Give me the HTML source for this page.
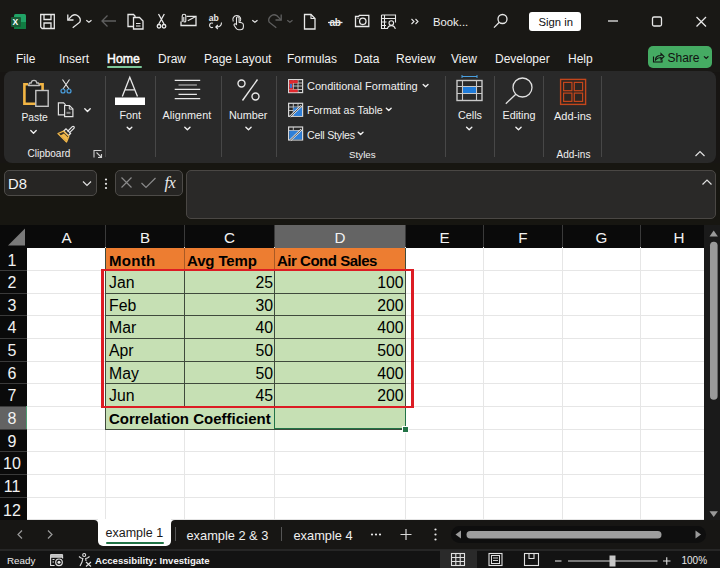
<!DOCTYPE html>
<html><head><meta charset="utf-8">
<style>
*{margin:0;padding:0;box-sizing:border-box}
html,body{width:720px;height:568px;overflow:hidden;background:#171513;font-family:"Liberation Sans",sans-serif;color:#fff}
.a{position:absolute}
.t{position:absolute;white-space:nowrap;line-height:1}
svg{position:absolute;overflow:visible}
.tab{position:absolute;top:52.7px;font-size:12px;color:#f2f2f2;white-space:nowrap;line-height:1}
#ribbon{left:3.5px;top:71px;width:712.5px;height:91.5px;background:#292929;border-radius:8px}
.sep{position:absolute;top:76px;width:1px;height:81px;background:#474747}
.rl{position:absolute;font-size:11px;color:#f0f0f0;white-space:nowrap;line-height:1}
.chev{position:absolute;width:4px;height:4px;border-right:1.2px solid #e0e0e0;border-bottom:1.2px solid #e0e0e0;transform:rotate(45deg)}
.grid{position:absolute;left:27px;top:247.5px;width:677px;height:273px;background:#fff}
.hl{position:absolute;left:27px;width:677px;height:1px;background:#e6e6e6}
.vl{position:absolute;top:247px;width:1px;height:273px;background:#e6e6e6}
.ch{position:absolute;top:225px;height:22.5px;background:#0a0a0a;color:#f2f2f2;font-size:15.2px;text-align:center;line-height:25px}
.chs{position:absolute;top:225px;width:1px;height:22.5px;background:#3a3a3a}
.rh{position:absolute;left:0;width:27px;height:22.75px;background:#0a0a0a;color:#f2f2f2;font-size:16px;text-align:center;line-height:23px;padding-right:3px}
.rhs{position:absolute;left:0;width:27px;height:1px;background:#3a3a3a}
.cell{position:absolute;font-size:15.8px;color:#000;line-height:23px;white-space:nowrap}
.num{text-align:right}
.bold{font-weight:bold}
</style></head><body>

<!-- ============ TITLE BAR ============ -->
<div class="a" style="left:0;top:0;width:720px;height:72px;background:#191815"></div>
<div class="a" style="left:0;top:163px;width:720px;height:62px;background:#171611"></div>
<!-- excel logo -->
<div class="a" style="left:14px;top:14px;width:12px;height:15px;background:#21a366;border-radius:1.5px"></div>
<div class="a" style="left:14px;top:22px;width:12px;height:7px;background:#107c41;border-radius:0 0 1.5px 1.5px"></div>
<div class="a" style="left:11px;top:16.5px;width:9.5px;height:10px;background:#185c37;border-radius:1px"></div>
<div class="t" style="left:12.5px;top:18px;font-size:8.5px;font-weight:bold;color:#fff">X</div>

<svg width="720" height="42" style="left:0;top:0" fill="none" stroke="#e8e8e8" stroke-width="1.3">
 <!-- save -->
 <path d="M40.7 14.5h13.6v14h-12.2l-1.4-1.5z"/>
 <path d="M44 14.5v5h7v-5M44 28.5v-5.5h7v5.5"/>
 <!-- undo -->
 <path d="M67.8 14.5V20h5.7"/>
 <path d="M68.2 19.6l4-4a5.3 5.3 0 0 1 7.6 6.6l-7.1 5.6"/>
 <path d="M86.3 20.3l2.6 2 2.6-2" stroke-width="1.2"/>
 <!-- back arrow (disabled) -->
 <path d="M102 21h14M107.5 15.5l-5.5 5.5 5.5 5.5" stroke="#5f5f5f"/>
 <!-- copy doc -->
 <path d="M133 26.5h-5v-12h5.5l1.5 1.5v1.5"/>
 <path d="M133.5 17.5h6l3.5 3.5v8h-9.5z"/>
 <path d="M136 23.5h4.5M136 26h4.5" stroke-width="1"/>
 <!-- scissors -->
 <path d="M158.5 14l5.5 10M164.3 14l-5.5 10"/>
 <circle cx="159" cy="26.3" r="1.8"/><circle cx="164" cy="26.3" r="1.8"/>
 <!-- envelope with clip -->
 <path d="M186.5 16.3h9.5v9.2h-15v-4"/>
 <path d="M187.8 20.7l8-4.2" stroke-width="1.1"/>
 <path d="M182.2 22v-6a1.8 1.8 0 0 1 3.6 0v5a1 1 0 0 1-2 0v-4" stroke-width="1.1"/>
 <!-- spelling ab -->
 <text x="208.8" y="21.3" font-family="Liberation Sans" font-size="8.6" font-weight="bold" fill="#e8e8e8" stroke="none">ab</text>
 <path d="M213 23.3a2.3 2.3 0 1 0 0 4" stroke-width="1.1"/>
 <path d="M221.5 22.5c0 3-2 4.5-5 4.5M217.8 25l-2 2 2 2" stroke-width="1.1"/>
 <!-- touch hand -->
 <path d="M233.3 21.5a4 4 0 1 1 7 0" stroke-width="1.1"/>
 <path d="M236.5 24.5v-6.5a1.3 1.3 0 0 1 2.6 0v4.3l2.5.5c1.2.3 1.8 1 1.8 2.2v1.5c0 2-1.2 3.3-3.2 3.3h-1.5c-1.2 0-2-.6-2.6-1.5l-2-3a1.1 1.1 0 0 1 1.8-1.2z" stroke-width="1.1"/>
 <path d="M252.3 20.3l2.6 2 2.6-2" stroke-width="1.2"/>
 <!-- redo disabled -->
 <path d="M281.2 14.5V20h-5.7" stroke="#5f5f5f"/>
 <path d="M280.8 19.6l-4-4a5.3 5.3 0 0 0 -7.6 6.6l7.1 5.6" stroke="#5f5f5f"/>
 <path d="M287.3 20.3l2.6 2 2.6-2" stroke="#5f5f5f" stroke-width="1.2"/>
 <!-- new doc -->
 <path d="M304.5 14.5h6.5l4 4v10.5h-10.5z"/>
 <path d="M311 14.5v4h4" stroke-width="1.1"/>
 <!-- strikethrough ab -->
 <text x="329.5" y="26" font-family="Liberation Sans" font-size="10" font-weight="bold" fill="#e8e8e8" stroke="none" letter-spacing="-0.3">ab</text>
 <path d="M328 22.5h14.5" stroke-width="1.3"/>
 <!-- camera -->
 <path d="M355.5 16.5h3l1-1.2h9.3v11.2h-13.3z"/>
 <circle cx="362.8" cy="21.3" r="3.2"/>
 <path d="M357.5 18.5h1" stroke-width="1.2"/>
 <!-- form icon -->
 <path d="M381.5 15h14v7.5M381.5 15v13.5h5.5M384.5 15v13.5M381.5 18.5h14M381.5 22h5M381.5 25.5h4.5" stroke-width="1.1"/>
 <circle cx="391.3" cy="23" r="2.3" stroke-width="1.1"/>
 <path d="M387.3 29c.4-2.2 2-3.4 4-3.4s3.6 1.2 4 3.4" stroke-width="1.1"/>
 <!-- >> -->
 <path d="M411.5 19l2.5 2.5-2.5 2.5M415.5 19l2.5 2.5-2.5 2.5" stroke-width="1.1"/>
 <!-- search -->
 <circle cx="502.5" cy="19" r="4.5"/>
 <path d="M499.3 22.3l-5.3 5.3"/>
 <!-- minimize -->
 <path d="M608 21h10"/>
 <!-- maximize -->
 <rect x="652.5" y="17" width="9" height="9" rx="1.5"/>
 <!-- close -->
 <path d="M696.5 17l9.5 9.5M706 17l-9.5 9.5"/>
</svg>
<div class="t" style="left:433px;top:16.8px;font-size:11.3px;color:#f0f0f0">Book...</div>
<!-- sign in -->
<div class="a" style="left:529px;top:12px;width:52px;height:19px;background:#fff;border-radius:3px"></div>
<div class="t" style="left:538.5px;top:16.8px;font-size:11.3px;color:#111">Sign in</div>

<!-- ============ TABS ============ -->
<div class="tab" style="left:16px">File</div>
<div class="tab" style="left:59px">Insert</div>
<div class="tab" style="left:107px;color:#fff;font-size:12.3px;-webkit-text-stroke:0.45px #fff">Home</div>
<div class="a" style="left:107px;top:66.3px;width:34.5px;height:2px;background:#7cc79a;border-radius:1px"></div>
<div class="tab" style="left:158px">Draw</div>
<div class="tab" style="left:204px">Page Layout</div>
<div class="tab" style="left:287px">Formulas</div>
<div class="tab" style="left:354px">Data</div>
<div class="tab" style="left:396px">Review</div>
<div class="tab" style="left:451px">View</div>
<div class="tab" style="left:495px">Developer</div>
<div class="tab" style="left:568px">Help</div>
<!-- share -->
<div class="a" style="left:648px;top:46px;width:64px;height:21.5px;background:#45ab63;border-radius:5px"></div>
<svg width="720" height="80" style="left:0;top:0" fill="none" stroke="#111" stroke-width="1.1">
 <path d="M653.5 56.5v5.5h8.5v-2.5"/>
 <path d="M655.5 60c0-3 2.5-4.5 5.5-4.5v-2l3 3-3 3v-2c-2.5 0-4 .8-5.5 2.5z"/>
 <path d="M704 56.3l2.2 2.2 2.2-2.2" stroke-width="1.2"/>
</svg>
<div class="t" style="left:667.5px;top:52px;font-size:12px;color:#111">Share</div>

<!-- ============ RIBBON ============ -->
<div id="ribbon" class="a"></div>
<div class="sep" style="left:105px"></div>
<div class="sep" style="left:154.5px"></div>
<div class="sep" style="left:220.5px"></div>
<div class="sep" style="left:276px"></div>
<div class="sep" style="left:444.5px"></div>
<div class="sep" style="left:494px"></div>
<div class="sep" style="left:543px"></div>
<div class="sep" style="left:601px"></div>

<svg width="720" height="170" style="left:0;top:0" fill="none" stroke-width="1.3">
 <!-- paste clipboard -->
 <path d="M24.4 84.3h19.5v19.4h-19.5z" fill="#1f1f1f" stroke="none"/>
 <path d="M28 84.2h-3.6v19.5h18.2v-19.5h-3.4" stroke="#f2b544" stroke-width="2.6"/>
 <path d="M28.5 85.5l1-2.5h1.8a2.7 2.7 0 0 1 5.4 0h1.8l1 2.5z" fill="#1f1f1f" stroke="#bdbdbd" stroke-width="1.3" stroke-linejoin="round"/>
 <rect x="35.8" y="90.5" width="12.4" height="15.8" fill="#262626" stroke="#c4c4c4" stroke-width="1.4"/>
 <!-- scissors blue -->
 <path d="M62.5 79.5l6.5 9.5M69.5 79.5l-6.5 9.5" stroke="#e8e8e8" stroke-width="1.1"/>
 <circle cx="63" cy="91" r="2" stroke="#4aa0e0" stroke-width="1.2"/>
 <circle cx="69" cy="91" r="2" stroke="#4aa0e0" stroke-width="1.2"/>
 <!-- copy -->
 <path d="M64 114.8h-5.6v-12h5.2l1.6 1.6v1.2" stroke="#e0e0e0" stroke-width="1.2"/>
 <path d="M64.6 105.5h4.9l3.4 3.4v7.7h-8.3z" stroke="#e0e0e0" stroke-width="1.2"/>
 <path d="M69.3 105.5v3.6h3.6" stroke="#e0e0e0" stroke-width="1"/>
 <path d="M66.5 112.8h4" stroke="#8a8a8a" stroke-width="2"/>
 <!-- brush -->
 <path d="M67.5 131.5l4.8-4.8a1.1 1.1 0 0 1 1.6 1.6l-4.8 4.8" stroke="#e8e8e8" stroke-width="1.2"/>
 <path d="M63.8 131l2.2-2.2 4.6 4.6-2.2 2.2z" stroke="#e8e8e8" stroke-width="1.2"/>
 <path d="M58 133.5l5.6-2.3 5.2 5.2-2.3 5.6z" fill="#3a3226" stroke="#f2b84a" stroke-width="1.3" stroke-linejoin="round"/>
 <path d="M60.5 135.5l6 5.5 1.5-3.6-4-4z" fill="#f2b84a" stroke="none"/>
 <!-- dialog launcher -->
 <path d="M94 157.5v-7h7.5" stroke="#cfcfcf" stroke-width="1.1"/>
 <path d="M96.5 152.5l5 5M98 157.5h3.5v-3.5" stroke="#cfcfcf" stroke-width="1.1"/>
 <!-- Font A -->
 <path d="M122.3 96.5l7.5 -19.2 7.7 19.2M125.2 89.9h9.2" stroke="#e8e8e8" stroke-width="1.3"/>
 <rect x="115" y="97.5" width="30" height="7.5" fill="#ffffff" stroke="none"/>
 <!-- alignment lines -->
 <path d="M174.7 80.4h25.5M174.7 89.4h25.5M174.7 98.6h25.5M178.5 94.4h18.4" stroke="#e8e8e8" stroke-width="1.2"/><path d="M178.5 85h18.4" stroke="#b0b0b0" stroke-width="1.2"/>
 <!-- percent -->
 <circle cx="241.5" cy="83.5" r="3.5" stroke="#e8e8e8" stroke-width="1.4"/>
 <circle cx="255.5" cy="96.5" r="3.5" stroke="#e8e8e8" stroke-width="1.4"/>
 <path d="M257.5 79.5l-15 21" stroke="#e8e8e8" stroke-width="1.4"/>
 <!-- conditional formatting icon -->
 <rect x="288.6" y="79.6" width="14" height="13" stroke="#d8d8d8" stroke-width="1.2"/>
 <path d="M288.6 83h14M288.6 86h14M288.6 89.5h14M293.3 79.6v13M298 79.6v13" stroke="#cfcfcf" stroke-width="0.9"/>
 <rect x="289.2" y="80.2" width="8.5" height="3" fill="#e0282e" stroke="none"/>
 <rect x="289.2" y="83.3" width="3.5" height="6" fill="#e0282e" stroke="none"/>
 <rect x="290" y="84" width="2" height="4" fill="#3a6fd0" stroke="none"/>
 <rect x="289.2" y="89.5" width="8.5" height="2.8" fill="#e0282e" stroke="none"/>
 <!-- format as table icon -->
 <rect x="288.6" y="103.3" width="14" height="13" stroke="#d8d8d8" stroke-width="1.2"/>
 <path d="M288.6 107h14M288.6 110.5h14M293.3 103.3v13M298 103.3v13" stroke="#cfcfcf" stroke-width="0.9"/>
 <rect x="293.5" y="107.5" width="8.5" height="8.5" fill="#2f7fd8" stroke="none"/>
 <path d="M290 116.8l11.5-11" stroke="#e8e8e8" stroke-width="2.2"/>
 <path d="M290 116.8l11.5-11" stroke="#2a2a2a" stroke-width="0.8"/>
 <!-- cell styles icon -->
 <rect x="288.6" y="127" width="14" height="13" stroke="#d8d8d8" stroke-width="1.2"/>
 <path d="M288.6 130.5h14M293.3 127v3.5" stroke="#cfcfcf" stroke-width="0.9"/>
 <rect x="289.3" y="130.8" width="12.6" height="8.6" fill="#2f7fd8" stroke="none"/>
 <path d="M290 140.5l11.5-11" stroke="#e8e8e8" stroke-width="2.2"/>
 <path d="M290 140.5l11.5-11" stroke="#2a2a2a" stroke-width="0.8"/>
 <!-- cells icon -->
 <path d="M462 76.5h15M462 75v3M477 75v3" stroke="#4aa0e0" stroke-width="1"/>
 <rect x="457" y="80.5" width="25" height="20" stroke="#c8c8c8" stroke-width="1.4"/>
 <path d="M457 86.5h25M457 93.5h25M462.5 80.5v20M476.5 80.5v20" stroke="#c8c8c8" stroke-width="1.1"/>
 <rect x="463" y="87" width="13" height="6" fill="#1e7ad8" stroke="none"/>
 <!-- editing magnifier -->
 <circle cx="522.5" cy="87.5" r="9.5" stroke="#e0e0e0" stroke-width="1.3"/>
 <path d="M515.8 94.2l-10 9.5" stroke="#e0e0e0" stroke-width="1.3"/>
 <!-- add-ins -->
 <rect x="560.6" y="79.4" width="25" height="25" fill="#2e2622" stroke="#c4461c" stroke-width="1.4"/>
 <rect x="563.6" y="82.4" width="8.3" height="8.3" stroke="#c4461c" stroke-width="1.2"/>
 <rect x="574.3" y="82.4" width="8.3" height="8.3" stroke="#c4461c" stroke-width="1.2"/>
 <rect x="563.6" y="93.1" width="8.3" height="8.3" stroke="#c4461c" stroke-width="1.2"/>
 <rect x="574.3" y="93.1" width="8.3" height="8.3" stroke="#c4461c" stroke-width="1.2"/>
 <!-- collapse caret -->
 <path d="M695.5 156l4.5-4.5 4.5 4.5" stroke="#e0e0e0" stroke-width="1.2"/>
</svg>

<div class="rl" style="left:21.5px;top:113.2px;font-size:10.3px">Paste</div>
<div class="rl" style="left:27.5px;top:149.4px;font-size:10px">Clipboard</div>

<div class="rl" style="left:119.5px;top:109.6px;font-size:10.8px">Font</div>
<div class="rl" style="left:162.5px;top:109.6px;font-size:10.8px;letter-spacing:0.1px">Alignment</div>
<div class="rl" style="left:229px;top:109.6px;font-size:10.8px">Number</div>

<div class="rl" style="left:307px;top:81.2px">Conditional Formatting</div>
<div class="rl" style="left:307px;top:105.3px;font-size:10.6px">Format as Table</div>
<div class="rl" style="left:307px;top:129.5px;font-size:10.6px;letter-spacing:-0.2px">Cell Styles</div>
<div class="rl" style="left:349px;top:150.2px;font-size:9.8px">Styles</div>

<div class="rl" style="left:458px;top:109.6px;font-size:10.8px">Cells</div>
<div class="rl" style="left:502.5px;top:109.6px;font-size:10.8px">Editing</div>
<div class="rl" style="left:554px;top:110.7px;font-size:11px">Add-ins</div>
<div class="rl" style="left:556.5px;top:150.2px;font-size:10px">Add-ins</div>

<svg width="720" height="170" style="left:0;top:0" fill="none" stroke="#f0f0f0" stroke-width="1.35" stroke-linecap="round" stroke-linejoin="round"><path d="M30.80 130.50l2.70 2.70 2.70 -2.70M84.80 108.80l2.70 2.70 2.70 -2.70M127.20 127.30l2.30 2.30 2.30 -2.30M184.80 127.20l2.60 2.60 2.60 -2.60M245.90 127.20l2.60 2.60 2.60 -2.60M466.60 127.20l2.60 2.60 2.60 -2.60M515.90 127.20l2.60 2.60 2.60 -2.60M423.20 84.40l2.40 2.40 2.40 -2.40M386.35 108.20l2.40 2.40 2.40 -2.40M358.20 132.20l2.40 2.40 2.40 -2.40"/></svg>
<!-- ============ FORMULA BAR ============ -->
<div class="a" style="left:3.5px;top:170.2px;width:93px;height:26.3px;border:1px solid #4d4b48;border-radius:5px;background:#262523"></div>
<div class="t" style="left:8px;top:176.5px;font-size:14.8px;color:#f4f4f4">D8</div>
<div class="a" style="left:115px;top:170.2px;width:68px;height:26.3px;border:1px solid #4d4b48;border-radius:5px;background:#262523"></div>
<div class="a" style="left:186px;top:170.2px;width:530px;height:49.3px;border:1px solid #4a4744;border-radius:5px;background:#2a2928"></div>
<svg width="720" height="230" style="left:0;top:0" fill="none" stroke="#e0e0e0" stroke-width="1.2">
 <path d="M83 181.5l4 4 4-4"/>
 <circle cx="106" cy="179.5" r="1.1" fill="#e8e8e8" stroke="none"/>
 <circle cx="106" cy="183.8" r="1.1" fill="#e8e8e8" stroke="none"/>
 <circle cx="106" cy="188" r="1.1" fill="#e8e8e8" stroke="none"/>
 <path d="M121.5 177.5l10 10M131.5 177.5l-10 10" stroke="#8a8a8a"/>
 <path d="M141.5 183l4.5 4.5 9.5 -9.5" stroke="#8a8a8a"/>
 <path d="M702.5 184.5l4.5-4.5 4.5 4.5"/>
</svg>
<div class="t" style="left:164.5px;top:175px;font-size:16.5px;color:#ececec;font-family:'Liberation Serif',serif;font-style:italic;letter-spacing:-0.5px">fx</div>

<!-- ============ SHEET ============ -->
<div class="a" style="left:0;top:225px;width:704px;height:295px;background:#0a0a0a"></div>
<div class="a" style="left:704px;top:225px;width:16px;height:295px;background:#1a1a1a"></div>
<div class="grid"></div>
<!--GRID-->
<div class="ch" style="left:28px;width:77px;background:#0a0a0a">A</div>
<div class="ch" style="left:106px;width:78px;background:#0a0a0a">B</div>
<div class="ch" style="left:185px;width:89px;background:#0a0a0a">C</div>
<div class="ch" style="left:275px;width:130px;background:#646464">D</div>
<div class="ch" style="left:406px;width:77px;background:#0a0a0a">E</div>
<div class="ch" style="left:484px;width:78px;background:#0a0a0a">F</div>
<div class="ch" style="left:563px;width:77px;background:#0a0a0a">G</div>
<div class="ch" style="left:641px;width:63px;background:#0a0a0a;padding-left:13px">H</div>
<div class="chs" style="left:105px"></div>
<div class="chs" style="left:184px"></div>
<div class="chs" style="left:274px"></div>
<div class="chs" style="left:405px"></div>
<div class="chs" style="left:483px"></div>
<div class="chs" style="left:562px"></div>
<div class="chs" style="left:640px"></div>
<div class="rh" style="top:247.5px;height:22.5px;line-height:26.1px;background:#0a0a0a">1</div>
<div class="rh" style="top:270px;height:23px;line-height:26.6px;background:#0a0a0a">2</div>
<div class="rh" style="top:293px;height:22px;line-height:25.6px;background:#0a0a0a">3</div>
<div class="rh" style="top:315px;height:23px;line-height:26.6px;background:#0a0a0a">4</div>
<div class="rh" style="top:338px;height:23px;line-height:26.6px;background:#0a0a0a">5</div>
<div class="rh" style="top:361px;height:22px;line-height:25.6px;background:#0a0a0a">6</div>
<div class="rh" style="top:383px;height:23px;line-height:26.6px;background:#0a0a0a">7</div>
<div class="rh" style="top:406px;height:23px;line-height:26.6px;background:#636363">8</div>
<div class="rh" style="top:429px;height:22px;line-height:25.6px;background:#0a0a0a">9</div>
<div class="rh" style="top:451px;height:23px;line-height:26.6px;background:#0a0a0a">10</div>
<div class="rh" style="top:474px;height:23px;line-height:26.6px;background:#0a0a0a">11</div>
<div class="rh" style="top:497px;height:23.399999999999977px;line-height:26.99999999999998px;background:#0a0a0a">12</div>
<div class="rhs" style="top:270px"></div>
<div class="rhs" style="top:293px"></div>
<div class="rhs" style="top:315px"></div>
<div class="rhs" style="top:338px"></div>
<div class="rhs" style="top:361px"></div>
<div class="rhs" style="top:383px"></div>
<div class="rhs" style="top:406px"></div>
<div class="rhs" style="top:429px"></div>
<div class="rhs" style="top:451px"></div>
<div class="rhs" style="top:474px"></div>
<div class="rhs" style="top:497px"></div>
<div class="hl" style="top:270px"></div>
<div class="hl" style="top:293px"></div>
<div class="hl" style="top:315px"></div>
<div class="hl" style="top:338px"></div>
<div class="hl" style="top:361px"></div>
<div class="hl" style="top:383px"></div>
<div class="hl" style="top:406px"></div>
<div class="hl" style="top:429px"></div>
<div class="hl" style="top:451px"></div>
<div class="hl" style="top:474px"></div>
<div class="hl" style="top:497px"></div>
<div class="vl" style="left:105px"></div>
<div class="vl" style="left:184px"></div>
<div class="vl" style="left:274px"></div>
<div class="vl" style="left:405px"></div>
<div class="vl" style="left:483px"></div>
<div class="vl" style="left:562px"></div>
<div class="vl" style="left:640px"></div>
<div class="a" style="left:105px;top:247.5px;width:301px;height:22.5px;background:#ed7d31"></div>
<div class="a" style="left:105px;top:270px;width:301px;height:159px;background:#c6e0b4"></div>
<div class="a" style="left:105px;top:270px;width:301px;height:1px;background:#3f4a3c"></div>
<div class="a" style="left:105px;top:293px;width:301px;height:1px;background:#3f4a3c"></div>
<div class="a" style="left:105px;top:315px;width:301px;height:1px;background:#3f4a3c"></div>
<div class="a" style="left:105px;top:338px;width:301px;height:1px;background:#3f4a3c"></div>
<div class="a" style="left:105px;top:361px;width:301px;height:1px;background:#3f4a3c"></div>
<div class="a" style="left:105px;top:383px;width:301px;height:1px;background:#3f4a3c"></div>
<div class="a" style="left:105px;top:406px;width:301px;height:1px;background:#3f4a3c"></div>
<div class="a" style="left:105px;top:428.5px;width:301px;height:1px;background:#3f4a3c"></div>
<div class="a" style="left:105px;top:247.5px;width:1px;height:181.5px;background:#3f4a3c"></div>
<div class="a" style="left:184px;top:247.5px;width:1px;height:158.5px;background:#3f4a3c"></div>
<div class="a" style="left:274px;top:247.5px;width:1px;height:181.5px;background:#3f4a3c"></div>
<div class="a" style="left:405px;top:247.5px;width:1px;height:181.5px;background:#3f4a3c"></div>
<div class="a" style="left:184px;top:247.5px;width:1px;height:22.5px;background:#a85a25"></div>
<div class="a" style="left:274px;top:247.5px;width:1px;height:22.5px;background:#a85a25"></div>
<div class="cell bold" style="left:109px;top:247.5px;height:22.5px;line-height:26.0px;font-size:15px;letter-spacing:0.3px">Month</div>
<div class="cell bold" style="left:187px;top:247.5px;height:22.5px;line-height:26.0px;font-size:15px;letter-spacing:-0.14px">Avg Temp</div>
<div class="cell bold" style="left:277px;top:247.5px;height:22.5px;line-height:26.0px;font-size:15px;letter-spacing:-0.48px">Air Cond Sales</div>
<div class="cell" style="left:109px;top:270px;height:23px;line-height:26.5px">Jan</div>
<div class="cell num" style="left:184px;width:89px;top:270px;height:23px;line-height:26.5px">25</div>
<div class="cell num" style="left:274px;width:129.5px;top:270px;height:23px;line-height:26.5px">100</div>
<div class="cell" style="left:109px;top:293px;height:22px;line-height:25.5px">Feb</div>
<div class="cell num" style="left:184px;width:89px;top:293px;height:22px;line-height:25.5px">30</div>
<div class="cell num" style="left:274px;width:129.5px;top:293px;height:22px;line-height:25.5px">200</div>
<div class="cell" style="left:109px;top:315px;height:23px;line-height:26.5px">Mar</div>
<div class="cell num" style="left:184px;width:89px;top:315px;height:23px;line-height:26.5px">40</div>
<div class="cell num" style="left:274px;width:129.5px;top:315px;height:23px;line-height:26.5px">400</div>
<div class="cell" style="left:109px;top:338px;height:23px;line-height:26.5px">Apr</div>
<div class="cell num" style="left:184px;width:89px;top:338px;height:23px;line-height:26.5px">50</div>
<div class="cell num" style="left:274px;width:129.5px;top:338px;height:23px;line-height:26.5px">500</div>
<div class="cell" style="left:109px;top:361px;height:22px;line-height:25.5px">May</div>
<div class="cell num" style="left:184px;width:89px;top:361px;height:22px;line-height:25.5px">50</div>
<div class="cell num" style="left:274px;width:129.5px;top:361px;height:22px;line-height:25.5px">400</div>
<div class="cell" style="left:109px;top:383px;height:23px;line-height:26.5px">Jun</div>
<div class="cell num" style="left:184px;width:89px;top:383px;height:23px;line-height:26.5px">45</div>
<div class="cell num" style="left:274px;width:129.5px;top:383px;height:23px;line-height:26.5px">200</div>
<div class="cell bold" style="left:109px;top:406px;height:23px;line-height:26.5px;font-size:15px">Correlation Coefficient</div>
<div class="a" style="left:274px;top:406px;width:132px;height:23px;border:1px solid #217346"></div>
<div class="a" style="left:403px;top:426.5px;width:5px;height:5px;background:#217346;outline:1px solid #fff"></div>
<div class="a" style="left:26px;top:406px;width:1px;height:23px;background:#4d9a70"></div>
<div class="a" style="left:101px;top:269.3px;width:312.7px;height:139.2px;border:3px solid #dc1c24;border-top-width:2.6px;border-bottom-width:2.7px"></div>
<!--/GRID-->
<svg width="30" height="30" style="left:0;top:220px"><path d="M8 25.5L25 8.5V25.5z" fill="#7a7a7a"/></svg>

<!-- ============ VERTICAL SCROLLBAR ============ -->
<svg width="720" height="568" style="left:0;top:0">
 <path d="M709.5 236.5l4.2-6 4.2 6z" fill="#9a9a9a"/>
 <rect x="710" y="241.7" width="7.6" height="158" rx="3.8" fill="#9a9a9a"/>
 <path d="M709.5 511.2l4.2 5.8 4.2-5.8z" fill="#9a9a9a"/>
</svg>

<!-- ============ SHEET TABS BAR ============ -->
<div class="a" style="left:85px;top:519px;width:100px;height:8px;background:#fff"></div>
<div class="a" style="left:27px;top:519.2px;width:677px;height:1px;background:#e4e4e4"></div>
<div class="a" style="left:0;top:520.4px;width:98px;height:28.6px;background:#171614;border-radius:0 4px 0 0"></div>
<div class="a" style="left:171px;top:520.4px;width:549px;height:28.6px;background:#171614;border-radius:4px 0 0 0"></div>
<div class="a" style="left:97px;top:535px;width:75px;height:14px;background:#171614"></div>
<div class="a" style="left:98px;top:519px;width:73px;height:26.6px;background:#fff;border-radius:0 0 5px 5px"></div>
<div class="t" style="left:105.5px;top:527px;font-size:12.5px;color:#1a1a1a">example 1</div>
<div class="a" style="left:105.5px;top:541.5px;width:58px;height:2px;background:#217346;border-radius:1px"></div>
<div class="a" style="left:175px;top:527px;width:1px;height:14px;background:#555"></div>
<div class="t" style="left:186.5px;top:529.5px;font-size:12.8px;color:#f0f0f0">example 2 &amp; 3</div>
<div class="a" style="left:280.5px;top:527px;width:1px;height:14px;background:#555"></div>
<div class="t" style="left:293.5px;top:529.5px;font-size:12.8px;color:#f0f0f0">example 4</div>
<svg width="720" height="568" style="left:0;top:0" fill="none" stroke="#d8d8d8" stroke-width="1.2">
 <path d="M22 530.5l-4 4 4 4M48 530.5l4 4-4 4" stroke="#9a9a9a"/>
 <circle cx="372" cy="534.5" r="1.1" fill="#e8e8e8" stroke="none"/>
 <circle cx="376" cy="534.5" r="1.1" fill="#e8e8e8" stroke="none"/>
 <circle cx="380" cy="534.5" r="1.1" fill="#e8e8e8" stroke="none"/>
 <path d="M400.5 534.5h11M406 529v11"/>
 <circle cx="435.5" cy="529.5" r="1.1" fill="#e8e8e8" stroke="none"/>
 <circle cx="435.5" cy="534.5" r="1.1" fill="#e8e8e8" stroke="none"/>
 <circle cx="435.5" cy="539.5" r="1.1" fill="#e8e8e8" stroke="none"/>
</svg>
<div class="a" style="left:451px;top:526px;width:255px;height:17px;background:#0e0e0e;border-radius:8.5px"></div>
<svg width="720" height="568" style="left:0;top:0">
 <path d="M455.5 534.5l5.5-4v8z" fill="#9a9a9a"/>
 <rect x="466.5" y="531" width="195" height="7.5" rx="3.75" fill="#9d9d9d"/>
 <path d="M701 534.5l-5.5-4v8z" fill="#9a9a9a"/>
</svg>

<!-- ============ STATUS BAR ============ -->
<div class="a" style="left:0;top:549px;width:720px;height:19px;background:#131313"></div>
<div class="a" style="left:0;top:549px;width:720px;height:1.5px;background:#262626"></div>
<div class="a" style="left:440px;top:550px;width:37px;height:18px;background:#2a2a2a"></div>
<div class="t" style="left:7px;top:555.5px;font-size:9.8px;color:#ececec">Ready</div>
<div class="t" style="left:95px;top:555.5px;font-size:9.6px;color:#f4f4f4;font-weight:bold">Accessibility: Investigate</div>
<div class="t" style="left:681.5px;top:555.5px;font-size:10px;color:#e8e8e8">100%</div>
<svg width="720" height="568" style="left:0;top:0" fill="none" stroke="#e0e0e0" stroke-width="1.1">
 <!-- macro record icon -->
 <path d="M50.6 554.6h12v2.6h-12z" fill="#bdbdbd" stroke="#d8d8d8" stroke-width="1"/>
 <path d="M50.6 557v8.5h4M62.6 557v1.5" stroke-width="1.1"/>
 <path d="M52.5 559.5h2M52.5 562h1.5" stroke-width="1"/>
 <circle cx="59" cy="562.3" r="3.3" fill="#131313" stroke-width="1.2"/>
 <circle cx="59" cy="562.3" r="1.5" fill="#e8e8e8" stroke="none"/>
 <!-- accessibility -->
 <circle cx="84.2" cy="555" r="1.5" stroke-width="1.1"/>
 <path d="M79 556.5c1.5 1.5 3 2 3.8 2l-.8 3.5-2 4M89.5 556.5c-1.5 1.5-3 2-3.8 2l.3 2.5" stroke-width="1.1"/>
 <path d="M86 562l5 4.5M91 562l-5 4.5" stroke-width="1.1"/>
 <!-- normal view grid -->
 <rect x="451.5" y="553.5" width="13" height="12"/>
 <path d="M451.5 557.5h13M451.5 561.5h13M455.8 553.5v12M460.2 553.5v12"/>
 <!-- page layout -->
 <rect x="489" y="553.5" width="13" height="12"/>
 <rect x="491.5" y="555.5" width="8" height="8" stroke-width="1"/>
 <path d="M493 558h5M493 560.5h5" stroke-width="0.9"/>
 <!-- page break -->
 <rect x="524.5" y="553.5" width="14" height="12"/>
 <path d="M529 553.5v5h5v-5M533.5 558.5" />
 <!-- zoom slider -->
 <path d="M555 561h6.5"/>
 <path d="M568 561h89.5" stroke="#9a9a9a" stroke-width="1.5"/>
 <rect x="609.5" y="555.5" width="6" height="11" fill="#c8c8c8" stroke="none"/>
 <path d="M663 561h7.5M666.75 557.25v7.5"/>
</svg>

</body></html>
